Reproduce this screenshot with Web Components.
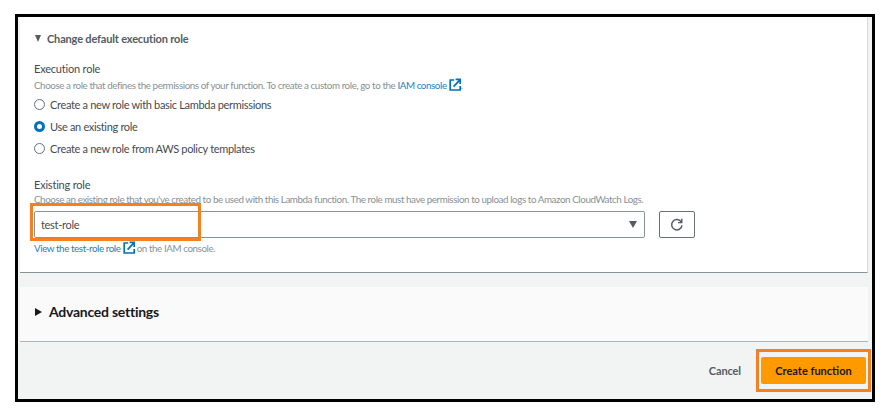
<!DOCTYPE html>
<html>
<head>
<meta charset="utf-8">
<title>Create function</title>
<style>
  html, body { margin: 0; background: #fff; }
  body { font-family: "Lato", "Liberation Sans", sans-serif; color: #16191f; }
</style>
</head>
<body>
<function-frame>
  <role-panel></role-panel>
  <advanced-panel></advanced-panel>
  <form-footer></form-footer>
</function-frame>

<script>
const EXT_ICON = `<svg width="12" height="13" viewBox="0 0 12 13" fill="none" stroke="#0073bb">
  <path d="M5.2 2H1.2v10h10V8" stroke-width="1.7"/>
  <path d="M4.6 8.6L10.4 2.4M6.6 1.4h4.6v4.6" stroke-width="1.7"/>
</svg>`;

class FunctionFrame extends HTMLElement {
  constructor() {
    super();
    this.attachShadow({ mode: 'open' });
    this.shadowRoot.innerHTML = `
      <style>
        :host {
          display: flex;
          flex-direction: column;
          box-sizing: border-box;
          width: 860px;
          height: 388px;
          margin: 14px 0 0 15px;
          border: 3px solid #000;
          padding-left: 2px;
          padding-right: 4px;
          background: #f2f3f3;
        }
      </style>
      <slot></slot>
    `;
  }
}

class RadioOption extends HTMLElement {
  constructor() {
    super();
    this.attachShadow({ mode: 'open' });
    this.shadowRoot.innerHTML = `
      <style>
        :host {
          display: flex;
          align-items: center;
          gap: 5px;
          height: 22px;
          font-size: 11px;
          letter-spacing: -0.32px;
          color: #444b53;
        }
        .dot {
          box-sizing: border-box;
          width: 11px;
          height: 11px;
          border-radius: 50%;
          border: 1px solid #687078;
          background: #fff;
        }
        :host([checked]) .dot { border: 3.5px solid #0073bb; }
      </style>
      <span class="dot"></span><slot></slot>
    `;
  }
}

class RoleSelect extends HTMLElement {
  constructor() {
    super();
    this.attachShadow({ mode: 'open' });
    this.shadowRoot.innerHTML = `
      <style>
        :host { display: flex; align-items: stretch; gap: 14px; position: relative; height: 27px; }
        .select {
          box-sizing: border-box;
          flex: 0 0 611px;
          display: flex;
          align-items: center;
          justify-content: space-between;
          border: 1px solid #879596;
          border-radius: 2px;
          padding: 0 7px 0 6px;
          font-size: 11px;
          letter-spacing: -0.3px;
          color: #444b53;
          background: #fff;
        }
        .arrow {
          width: 0; height: 0;
          border-left: 4px solid transparent;
          border-right: 4px solid transparent;
          border-top: 7px solid #545b64;
        }
        .refresh {
          box-sizing: border-box;
          width: 36px;
          display: flex;
          align-items: center;
          justify-content: center;
          border: 1px solid #687078;
          border-radius: 2px;
          background: #fff;
        }
        .mark {
          position: absolute;
          left: -4px;
          top: -8px;
          width: 171px;
          height: 38px;
          box-sizing: border-box;
          border: 3px solid #f5801f;
        }
      </style>
      <div class="select"><span>test-role</span><span class="arrow"></span></div>
      <div class="refresh">
        <svg width="14" height="14" viewBox="0 0 14 14" fill="none" stroke="#545b64" stroke-width="1.5">
          <path d="M11.4 4.2A5.2 5.2 0 1 0 12 7.4"/>
          <path d="M11.8 0.8v3.8H8" stroke-width="1.4"/>
        </svg>
      </div>
      <div class="mark"></div>
    `;
  }
}

class RolePanel extends HTMLElement {
  constructor() {
    super();
    this.attachShadow({ mode: 'open' });
    this.shadowRoot.innerHTML = `
      <style>
        :host {
          display: block;
          box-sizing: border-box;
          height: 256px;
          padding: 13px 14px 0 14px;
          background: #fff;
          border-right: 1px solid #d5dbdb;
          border-bottom: 1px solid #879596;
        }
        .toggle {
          display: flex;
          align-items: center;
          gap: 6px;
          height: 16px;
          font-size: 11px;
          font-weight: 700;
          letter-spacing: -0.17px;
          color: #545b64;
        }
        .tri-down {
          width: 0; height: 0;
          margin-left: 1px;
          border-left: 3.5px solid transparent;
          border-right: 3.5px solid transparent;
          border-top: 7px solid #545b64;
        }
        .label { font-size: 11px; letter-spacing: -0.2px; color: #444b53; line-height: 14px; }
        .hint { font-size: 9.8px; letter-spacing: -0.42px; color: #879196; line-height: 13px; white-space: nowrap; }
        a { color: #1a7fc1; text-decoration: none; }
        svg { vertical-align: -2px; }
        .exec { margin-top: 16px; }
        .exec .hint { margin-top: 2px; }
        .radios { margin-top: 1px; }
        .existing { margin-top: 19px; }
        .existing .hint { margin-top: 1px; margin-bottom: 5px; }
        .view { margin-top: 3px; line-height: 13px; font-size: 9.8px; letter-spacing: -0.42px; color: #879196; white-space: nowrap; }
      </style>
      <div class="toggle"><span class="tri-down"></span><span>Change default execution role</span></div>
      <div class="exec">
        <div class="label">Execution role</div>
        <div class="hint">Choose a role that defines the permissions of your function. To create a custom role, go to the <a>IAM console</a> ${EXT_ICON}.</div>
      </div>
      <div class="radios">
        <radio-option>Create a new role with basic Lambda permissions</radio-option>
        <radio-option checked>Use an existing role</radio-option>
        <radio-option>Create a new role from AWS policy templates</radio-option>
      </div>
      <div class="existing">
        <div class="label">Existing role</div>
        <div class="hint">Choose an existing role that you've created to be used with this Lambda function. The role must have permission to upload logs to Amazon CloudWatch Logs.</div>
      </div>
      <role-select></role-select>
      <div class="view"><a>View the test-role role</a> ${EXT_ICON} on the IAM console.</div>
    `;
  }
}

class AdvancedPanel extends HTMLElement {
  constructor() {
    super();
    this.attachShadow({ mode: 'open' });
    this.shadowRoot.innerHTML = `
      <style>
        :host {
          display: flex;
          align-items: center;
          gap: 7px;
          box-sizing: border-box;
          height: 55px;
          margin-top: 14px;
          padding-left: 15px;
          padding-bottom: 5px;
          background: #fafafa;
          border-bottom: 1px solid #aab7b8;
          font-size: 14px;
          font-weight: 700;
          letter-spacing: -0.25px;
          color: #16191f;
        }
        .tri-right {
          width: 0; height: 0;
          border-top: 4.5px solid transparent;
          border-bottom: 4.5px solid transparent;
          border-left: 7px solid #16191f;
        }
      </style>
      <span class="tri-right"></span><span>Advanced settings</span>
    `;
  }
}

class FormFooter extends HTMLElement {
  constructor() {
    super();
    this.attachShadow({ mode: 'open' });
    this.shadowRoot.innerHTML = `
      <style>
        :host {
          flex: 1;
          display: flex;
          align-items: center;
          justify-content: flex-end;
          gap: 20px;
          padding-right: 2px;
          position: relative;
          font-size: 11px;
          font-weight: 700;
        }
        .cancel { color: #545b64; letter-spacing: -0.1px; }
        .create {
          display: flex;
          align-items: center;
          justify-content: center;
          width: 105px;
          height: 27px;
          border-radius: 2px;
          background: #ff9900;
          color: #16191f;
          position: relative;
        }
        .mark {
          position: absolute;
          left: -5px;
          top: -8px;
          width: 115px;
          height: 43px;
          box-sizing: border-box;
          border: 3px solid #f5801f;
        }
      </style>
      <span class="cancel">Cancel</span>
      <div class="create">Create function<div class="mark"></div></div>
    `;
  }
}

customElements.define('function-frame', FunctionFrame);
customElements.define('radio-option', RadioOption);
customElements.define('role-select', RoleSelect);
customElements.define('role-panel', RolePanel);
customElements.define('advanced-panel', AdvancedPanel);
customElements.define('form-footer', FormFooter);
</script>
</body>
</html>
